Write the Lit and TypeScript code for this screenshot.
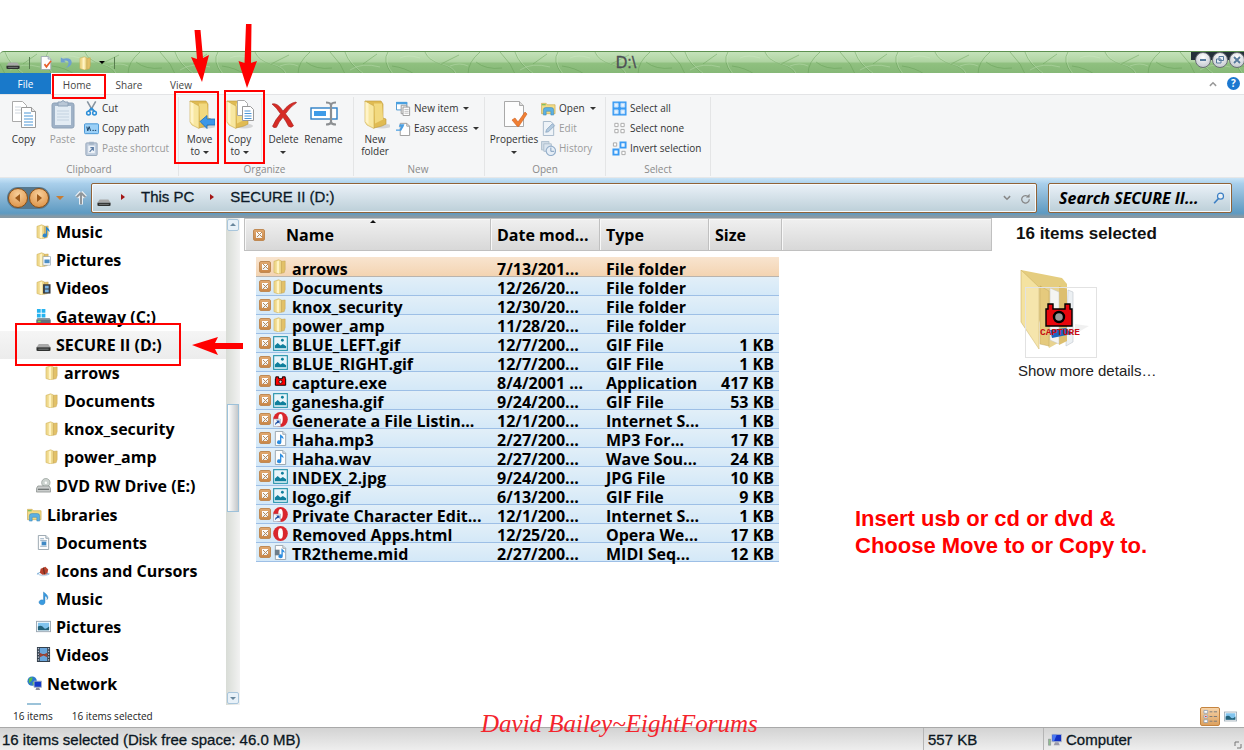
import { LitElement, html, svg, css, TemplateResult } from "lit";
import { customElement } from "lit/decorators.js";
import { classMap } from "lit/directives/class-map.js";

const folderShape = svg`
  <path d="M1 2.5 6 .8 9 2v13l-3 1-5-1.6z" fill="#efd98c" stroke="#c9a94e" stroke-width=".5"/>
  <path d="M4 2.6 6.5 1.5v14L4 14.6z" fill="#fff4c4"/>
  <path d="M9 2.5 13 2v9l-1 3.5-3 .8z" fill="#e2c168" stroke="#b99740" stroke-width=".4"/>`;

const noteShape = svg`<path d="M8 1v8.8a3.200 2.600 0 1 0 1.600 2.200V5.200c2 .6 2.600 2 2 4 2.400-2.800.6-5-3.600-8.200z" fill="#3a9be0" stroke="#1c6fae" stroke-width=".4"/>`;

const docShape = svg`<path d="M2.500.5h8l3 3v12h-11z" fill="#fdfdfd" stroke="#98a4ae"/><path d="M10.500.5v3h3" fill="#dfe6ec" stroke="#98a4ae"/>`;

const driveShape = svg`
  <path d="M3 7.500h10l2.500 3.500h-15z" fill="#a9a9a9"/>
  <path d="M.5 11h15v3q0 .8-1.500.8h-12q-1.500 0-1.500-.8z" fill="#2f3130"/>
  <path d="M2.500 13h11" stroke="#7c8080"/>`;

const bigFolder = svg`
  <ellipse cx="22" cy="27" rx="9" ry="2.500" fill="#0002"/>
  <path d="M5 2h16l2 3v14l3 1v5l-4 2-8 2z" fill="#e0bb53" stroke="#bd983a" stroke-width=".6"/>
  <path d="M14 4.500h8l1 16-8 4z" fill="#f2d97f"/>
  <path d="M5 2l9 5v22.500L7 26 5 23z" fill="#f8e7a0" stroke="#caa748" stroke-width=".6"/>
  <path d="M5.500 3l3 1.500v21l-3-3z" fill="#fff4c8"/>`;

const icons: Record<string, [number, TemplateResult]> = {
  folder: [16, folderShape],
  folderMusic: [16, svg`${folderShape}<path d="M10.500 2.500v8a2.400 2 0 1 0 1.400 1.800V6.500l2.600 2q.4-3-4-6z" fill="#2d86cc"/>`],
  folderPictures: [16, svg`${folderShape}<rect x="7.500" y="5" width="8" height="9" fill="#fff" stroke="#8fa2b2" stroke-width=".7"/><path d="M9 8h5.500v4H9z" fill="#4d8fc4"/>`],
  folderVideos: [16, svg`${folderShape}<rect x="7.500" y="4.500" width="8" height="10" fill="#3b3f44"/><path d="M9.500 6h4v3h-4zM9.500 10h4v3h-4z" fill="#77b3e6"/>`],
  osDrive: [16, svg`<path d="M1 0h4v4H1zM6 0h4v4H6zM1 5h4v4H1zM6 5h4v4H6z" fill="#25b3f0"/><path d="M1.500 9.500h13l1 2v3.500H.5v-3.500z" fill="#8c979e"/><path d="M.5 11.500h15V15H.5z" fill="#64737c"/><rect x="2" y="12.500" width="3" height="1.500" fill="#7ed957"/>`],
  drive: [16, driveShape],
  dvd: [16, svg`<circle cx="10.500" cy="5" r="4.500" fill="#ccd3cf" stroke="#8c9691" stroke-width=".7"/><circle cx="10.500" cy="5" r="1.300" fill="#fff"/><path d="M2 8.500h12l1.500 2.500v4H.5v-4z" fill="#c9cccb" stroke="#7d8381" stroke-width=".7"/><path d="M2 12h12" stroke="#4c5150"/>`],
  library: [16, svg`<path d="M.5 2.500h5l1 1.500h8.500v9.500H.5z" fill="#f2db85" stroke="#c8a951" stroke-width=".7"/><path d="M1 4h4" stroke="#53b552"/><path d="M2.500 15V9.500q0-2.500 2.500-2.500h6q2.500 0 2.500 2.500V15h-3v-4h-5v4z" fill="#5cb0e2" stroke="#2f7fb3" stroke-width=".5"/>`],
  document: [16, svg`${docShape}<path d="M4.500 4h4M4.500 6h7M4.500 12h7" stroke="#8fa9bf"/><rect x="6" y="7" width="5" height="4" fill="#3f88c4"/>`],
  cursors: [16, svg`<path d="M1 10q7 5 14 0-1 4-7 4t-7-4z" fill="#c4d9ec"/><path d="M5 6l5-2 3 3-1 5-5 .5-3-2z" fill="#b8402c"/><path d="M8 5l1 7" stroke="#4e2b20"/><path d="M1 12l3-2M14 12l-3-1" stroke="#6ba4d2"/>`],
  note: [16, noteShape],
  picture: [16, svg`<rect x=".5" y="2.500" width="15" height="11" fill="#fff" stroke="#99a7b3"/><path d="M2 4h12v8H2z" fill="#81c4ee"/><path d="M2 8q4-2 6 1t6-1v4H2z" fill="#23627a"/>`],
  video: [16, svg`<path d="M1 0h14v16H1z" fill="#33404c"/><path d="M4 1h8v6.500H4zM4 8.500h8V15H4z" fill="#6ba6dc"/><path d="M4 6l4 2 4-2v5l-4-2-4 2z" fill="#9e4436"/><path d="M2.500 1v14M13.500 1v14" stroke="#dde" stroke-dasharray="1.500 1.500"/>`],
  network: [16, svg`<circle cx="5.500" cy="5.500" r="5" fill="#2b77d0"/><path d="M2 3q3-3 4-1l-1 3-3 3zM6 6l3 1-3 3z" fill="#55bd4c"/><path d="M7.500 5.500h8v6.500h-8z" fill="#1439c8" stroke="#aab4c4"/><path d="M10 12.500h3l1 2.500H9z" fill="#889"/>`],
  computer: [16, svg`<path d="M.5 7h2.500v7H.5z" fill="#8fbc8f" stroke="#778" stroke-width=".5"/><path d="M4.500 1.500h11v8.500h-11z" fill="#1230c4" stroke="#b9c0c8"/><path d="M5 2h5l-3 7H5z" fill="#4a78f2"/><path d="M8 10.500h4l1.500 3.500h-7z" fill="#99a"/>`],
  image: [16, svg`<rect x=".7" y=".7" width="14.600" height="14.600" fill="#e9f5fa" stroke="#2793ab" stroke-width="1.200"/><path d="M2 13v-3l3-2.500 3 2.500 2.500-1.500L14 11v2z" fill="#0f7f9c"/><circle cx="10" cy="4.500" r="1.500" fill="#0f7f9c"/>`],
  capture: [16, svg`<path d="M3 5V3h3v2h4V3h3v2h.5v7h-11V5z" fill="#f00" stroke="#000"/><circle cx="8" cy="8.300" r="1.700" fill="#ddd" stroke="#000" stroke-width=".8"/>`],
  opera: [16, svg`<ellipse cx="8" cy="8" rx="7.800" ry="8" fill="#d9262c"/><ellipse cx="8" cy="8" rx="2.600" ry="5.600" fill="#fff"/>`],
  operaLink: [16, svg`<ellipse cx="8" cy="8" rx="7.800" ry="8" fill="#d9262c"/><ellipse cx="8" cy="7.500" rx="2.400" ry="5.400" fill="#fff"/><path d="M.5 7.500h7.500v8H.5z" fill="#f4f7fb" stroke="#99a" stroke-width=".6"/><path d="M2 14q0-3 2.500-3.500l-1-1.500H7v3.500l-1.200-1Q4 12 2 14z" fill="#1d4fa5"/>`],
  audio: [16, svg`${docShape}<path d="M7.500 3.500v6.700a2.300 2 0 1 0 1.400 1.800V7l2.300 1.500Q11.500 6 7.500 3.500z" fill="#2a8ce0"/>`],
  midi: [16, svg`${docShape}<path d="M2 5h5v6H2z" fill="#6d7d8a"/><path d="M9 3.500v6.700a2.300 2 0 1 0 1.400 1.800V7l2 1.500Q12.500 6 9 3.500z" fill="#2a8ce0"/>`],
  details: [16, svg`<path d="M1 1.500h4v3H1zM1 6.500h4v3H1zM1 11.500h4v3H1z" fill="#fff" stroke="#8799b0" stroke-width=".8"/><path d="M2 8h2" stroke="#d33"/><path d="M7 3h3M11.500 3h3.500M7 8h3M11.500 8h3.500M7 13h3M11.500 13h3.500" stroke="#777"/>`],
  cut: [16, svg`<path d="M3.500.5l5.500 9.500M12.500.5L7 10" stroke="#8794a0" stroke-width="1.700"/><path d="M8 7.500L5 11M8 7.500l3 3.500" stroke="#2e8fd8" stroke-width="2"/><circle cx="4.800" cy="12.800" r="2" fill="none" stroke="#2e8fd8" stroke-width="1.600"/><circle cx="11.200" cy="12.800" r="2" fill="none" stroke="#2e8fd8" stroke-width="1.600"/>`],
  path: [16, svg`<rect x=".5" y="3" width="15" height="10.500" rx="1" fill="#9bd0f7" stroke="#4293d4"/><path d="M3 6l1 4.500L5.500 6l1.500 4.500M9 10h1.500M11.500 10H13" stroke="#143a5c" fill="none"/>`],
  shortcut: [16, svg`<rect x="2" y="2" width="12" height="13.500" rx="1" fill="#c0cddd" stroke="#93a5ba"/><path d="M5.500.8h5V4h-5z" fill="#a3b3c5"/><path d="M4.500 5h7v8h-7z" fill="#eef3f8"/><path d="M6 11.500l3.500-4M6.800 7h3.200v3.500" fill="none" stroke="#5f7ea6" stroke-width="1.200"/>`],
  newItem: [16, svg`<path d="M.5 1.500h11v8H.5z" fill="#fff" stroke="#4895d1"/><path d="M0 1h12v2.500H0z" fill="#4aa0e0"/><path d="M5.500 4.500h6v9h-6z" fill="#eee" stroke="#999"/><path d="M7.500 6.500h7v9h-7z" fill="#fff" stroke="#999"/><path d="M9 9h4.500M9 11h4.500M9 13h4.500" stroke="#bbb"/>`],
  easy: [16, svg`<path d="M4.500 2.500h7l3 3v10h-10z" fill="#fff" stroke="#999"/><path d="M11.500 2.500v3h3" fill="none" stroke="#999"/><path d="M0 9h4l1.500-3H3L4 3.500h5L8 6l-2.500 4.500H0z" fill="#4a9ee2"/>`],
  edit: [16, svg`<path d="M2.500.5h8l3 3v12h-11z" fill="#eef3f8" stroke="#a5b8c9"/><path d="M5 12l1-3 6-6 2.500 2L8 11.500z" fill="#b3cadf" stroke="#7f9cb8" stroke-width=".7"/>`],
  history: [16, svg`<path d="M.5.500h8v9h-8z" fill="#cfdae5" stroke="#aebfce"/><path d="M3 3h8v8H3z" fill="#dbe5ee" stroke="#aebfce"/><circle cx="10.500" cy="10.500" r="5" fill="#e6eef6" stroke="#94aeca" stroke-width="1.200"/><path d="M10.500 7v4H14" stroke="#7c9abb" fill="none"/>`],
  selectAll: [16, svg`<path d="M.5.500h15v15H.5z" fill="#3a9bf4"/><path d="M2.500 2.500h4v4h-4zM9.500 2.500h4v4h-4zM2.500 9.500h4v4h-4zM9.500 9.500h4v4h-4z" fill="#e6f3ff" stroke="#bcdcfa"/>`],
  selectNone: [16, svg`<path d="M3 2.500h3.500V6H3zM9.500 2.500H13V6H9.500zM3 9h3.500v3.500H3zM9.500 9H13v3.500H9.500z" fill="#fff" stroke="#a8a8a8"/>`],
  invert: [16, svg`<path d="M1.500 2h3.500v3.500H1.500zM10.500 11h3.500v3.500h-3.500z" fill="#fff" stroke="#a8a8a8"/><path d="M9 1.500h5.500V7H9zM1.500 9H7v5.500H1.500z" fill="#eef7ff" stroke="#3a9bf4" stroke-width="2"/>`],
  undo: [16, svg`<path d="M2 1.500v6h6L5.800 5.500q5-1.500 5.200 2.500 0 3-3.500 5.500 7-1.500 7-6.500-.5-6-10-4z" fill="#6f9fd0"/>`],
  check: [16, svg`${docShape}<path d="M5.500 10l3 4 6-8-1.500-1-4.500 5.500-1.500-2z" fill="#e8602c"/>`],
  magnify: [16, svg`<circle cx="10" cy="5.500" r="4" fill="#fff8" stroke="#3c7fc4" stroke-width="1.600"/><path d="M7 9l-5.500 6" stroke="#3c7fc4" stroke-width="2.200"/>`],
  refresh: [16, svg`<path d="M12.500 6A5.500 5.500 0 1 0 13.500 9" fill="none" stroke="#878787" stroke-width="1.800"/><path d="M8.500 6.500h5.500V1z" fill="#878787"/>`],
  chevDown: [16, svg`<path d="M3 5l5 5 5-5" fill="none" stroke="#888" stroke-width="2.400"/>`],
  chevUp: [16, svg`<path d="M3 11l5-5 5 5" fill="none" stroke="#999" stroke-width="2.400"/>`],
  up: [16, svg`<path d="M8 1.500L3 7M8 1.500L13 7M8 2v13.500" stroke="#eef3f7" stroke-width="4.500" fill="none"/><path d="M8 2L3 7M8 2l5 5M8 2v13" stroke="#8f959a" stroke-width="2.400" fill="none"/>`],
  bigCopy: [30, svg`<path d="M3.500 2.500h10l4 4v16h-14z" fill="#fff" stroke="#aaa"/><path d="M6 8h6M6 11h6M6 14h6" stroke="#cfd6de"/><path d="M12.500 8.500h10l4 4v16h-14z" fill="#fff" stroke="#999"/><path d="M22.500 8.500v4h4" fill="#e7e7e7" stroke="#999"/><path d="M15 14h7M15 17h9M15 20h9M15 23h9M15 26h9" stroke="#4d97d6"/>`],
  bigPaste: [30, svg`<rect x="4" y="4" width="22" height="25" rx="2" fill="#9fb2c7" stroke="#8ea2b8"/><path d="M7 7h16v19H7z" fill="#e3ecf4"/><path d="M9 12h12M9 15h12M9 18h12M9 21h12" stroke="#c3d2e0"/><path d="M10 3h3q2-3 4 0h3v4H10z" fill="#b9c7d6" stroke="#8ea2b8"/>`],
  bigMove: [30, svg`${bigFolder}<path d="M15 22.500l7-6v3.500h8v6h-8v3.500z" fill="#3c97e8" stroke="#1a6cb8" stroke-width=".8"/>`],
  bigCopyTo: [30, svg`<g transform="translate(-3 0)">${bigFolder}</g><path d="M12.500 1.500h7l3 3v12h-10z" fill="#fff" stroke="#aaa"/><path d="M17.500 7.500h8l3 3v11h-11z" fill="#fff" stroke="#999"/><path d="M19.500 12h6M19.500 14.500h7M19.500 17h7M19.500 19.500h7" stroke="#4d97d6"/>`],
  bigDelete: [30, svg`<path d="M3 5q5-2 11 7 6-8 13-9l.5.800q-6 3.500-11 11 5 6 8 12-2 2.500-5 .5-3-6-5.500-9-4 4-6.500 10-3 1-4-1 3-7 8-12.500Q8 9 3 5z" fill="#d62b25" stroke="#a51a18" stroke-width=".6"/>`],
  bigRename: [30, svg`<rect x="2" y="9" width="26" height="11" fill="#fff" stroke="#2d7fc6" stroke-width="1.400"/><rect x="5" y="12" width="12" height="5" fill="#3e9be8"/><path d="M17 3.500q4 0 5 2 1-2 5-2M22 5.500v18M17 25.500q4 0 5-2 1 2 5 2" fill="none" stroke="#8c8f92" stroke-width="2.200"/>`],
  bigFolder: [30, bigFolder],
  bigProps: [30, svg`<path d="M5.500 2.500h15l4 4v21h-19z" fill="#fdfdfd" stroke="#a9a9a9"/><path d="M20.500 2.500v4h4" fill="#ddd" stroke="#a9a9a9"/><path d="M13 21l3-2 3 4 7-10 2 2-8 12q-1 1-2 0z" fill="#f07f33" stroke="#cc5d1c" stroke-width=".6"/>`],
};

const icon = (name: string, size = 16) => html`
  <svg class="icon" width=${size} height=${size} viewBox="0 0 ${icons[name][0]} ${icons[name][0]}" aria-hidden="true">${icons[name][1]}</svg>`;

interface TreeItem { label: string; icon: string; level: number; head?: boolean; current?: boolean; }

const tree: TreeItem[] = [
  { label: "Music", icon: "folderMusic", level: 1 },
  { label: "Pictures", icon: "folderPictures", level: 1 },
  { label: "Videos", icon: "folderVideos", level: 1 },
  { label: "Gateway (C:)", icon: "osDrive", level: 1, head: true },
  { label: "SECURE II (D:)", icon: "drive", level: 1, current: true },
  { label: "arrows", icon: "folder", level: 2 },
  { label: "Documents", icon: "folder", level: 2 },
  { label: "knox_security", icon: "folder", level: 2 },
  { label: "power_amp", icon: "folder", level: 2 },
  { label: "DVD RW Drive (E:)", icon: "dvd", level: 1, head: true },
  { label: "Libraries", icon: "library", level: 0, head: true },
  { label: "Documents", icon: "document", level: 1 },
  { label: "Icons and Cursors", icon: "cursors", level: 1 },
  { label: "Music", icon: "note", level: 1 },
  { label: "Pictures", icon: "picture", level: 1 },
  { label: "Videos", icon: "video", level: 1 },
  { label: "Network", icon: "network", level: 0, head: true },
];

const files: [string, string, string, string, string][] = [
  ["folder", "arrows", "7/13/201...", "File folder", ""],
  ["folder", "Documents", "12/26/20...", "File folder", ""],
  ["folder", "knox_security", "12/30/20...", "File folder", ""],
  ["folder", "power_amp", "11/28/20...", "File folder", ""],
  ["image", "BLUE_LEFT.gif", "12/7/200...", "GIF File", "1 KB"],
  ["image", "BLUE_RIGHT.gif", "12/7/200...", "GIF File", "1 KB"],
  ["capture", "capture.exe", "8/4/2001 ...", "Application", "417 KB"],
  ["image", "ganesha.gif", "9/24/200...", "GIF File", "53 KB"],
  ["operaLink", "Generate a File Listin...", "12/1/200...", "Internet S...", "1 KB"],
  ["audio", "Haha.mp3", "2/27/200...", "MP3 For...", "17 KB"],
  ["audio", "Haha.wav", "2/27/200...", "Wave Sou...", "24 KB"],
  ["image", "INDEX_2.jpg", "9/24/200...", "JPG File", "10 KB"],
  ["image", "logo.gif", "6/13/200...", "GIF File", "9 KB"],
  ["operaLink", "Private Character Edit...", "12/1/200...", "Internet S...", "1 KB"],
  ["opera", "Removed Apps.html", "12/25/20...", "Opera We...", "17 KB"],
  ["midi", "TR2theme.mid", "2/27/200...", "MIDI Seq...", "12 KB"],
];

@customElement("app-root")
export class AppRoot extends LitElement {
  static styles = css`
    :host {
      display: flex; flex-direction: column; position: relative; box-sizing: border-box;
      min-height: 100vh; padding-top: 51px; background: #fff; color: #000; overflow: hidden;
      font: 10px/12px "Open Sans", "Noto Sans", sans-serif;
    }
    * { box-sizing: border-box; }
    button, input { font: inherit; color: inherit; margin: 0; padding: 0; border: 0; background: none; }
    .icon { display: block; flex: none; }
    .caret { display: inline-block; border: 3px solid transparent; border-top-color: currentColor; border-bottom: 0; vertical-align: middle; }

    .titlebar { position: relative; display: flex; height: 22px; border-top: 1px solid #5d9150; background: linear-gradient(#c4e2b9 0%, #b0d4a3 45%, #8fc07f 55%, #86b877 100%); border-top-left-radius: 4px; }
    .veins { position: absolute; inset: 0; width: 100%; height: 100%; }
    .quick { position: relative; display: flex; align-items: center; gap: 6px; padding-left: 6px; }
    .sep { width: 1px; height: 12px; background: #587d4f; margin: 0 3px; }
    .title { position: absolute; left: 0; right: 0; padding-left: 8px; text-align: center; margin: 0; font: 500 16px/22px "Liberation Sans", Arial, sans-serif; color: #4d4f55; -webkit-text-stroke: .3px #4d4f55; }
    .winbuttons { position: relative; display: flex; gap: 1px; margin-left: auto; align-self: start; height: 8px; background: #24303a; padding-left: 4px; }
    .round { flex: none; width: 16px; height: 16px; border-radius: 50%; border: 1px solid #6b7076; background: radial-gradient(circle at 50% 30%, #fff, #b9bfc8); display: grid; place-items: center; }
    .round:last-child { margin-right: -1px; }

    .tabs { display: flex; align-items: center; height: 21px; }
    .tab { width: 52px; height: 21px; text-align: center; color: #444; font-size: 10px; padding-top: 2px; }
    .tab.file { background: #1979ca; color: #fff; width: 51px; padding-top: 0; }
    .tabs .help { margin-left: auto; display: flex; align-items: center; gap: 9px; padding-right: 4px; }
    .q { width: 13px; height: 13px; border-radius: 50%; background: #1c78d0; color: #fff; font-weight: 700; line-height: 13px; }

    .ribbon { display: flex; height: 84px; background: #f5f6f7; border-top: 1px solid #e3e4e6; border-bottom: 1px solid #e6e7e8; color: #333; }
    .group { position: relative; display: flex; flex-direction: column; justify-content: space-between; border-right: 1px solid #e4e5e6; margin: 2px 0 1px; padding: 1px 4px 0; }
    .clipboard { width: 179px; } .organize { width: 175px; } .new { width: 131px; } .open { width: 121px; } .select { width: 105px; }
    .organize { padding-left: 1px; } .new { padding-left: 2px; }
    .tools { display: flex; align-items: flex-start; }
    .grouplabel { text-align: center; color: #8a8a8a; line-height: 14px; }
    .big { display: flex; flex-direction: column; align-items: center; width: 39px; line-height: 12px; white-space: nowrap; padding-top: 1px; }
    .big .lbl { margin-top: 4px; height: 24px; text-align: center; }
    .dim { color: #9b9b9b; }
    .col { display: flex; flex-direction: column; margin-left: 2px; }
    .small { display: flex; align-items: center; gap: 3px; height: 20px; white-space: nowrap; }
    .small .caret { margin-left: 2px; }
    .organize .tools { gap: 1px; }
    .rule { width: 1px; height: 62px; background: #e4e5e6; margin: 0 1px; }
    .new .big { width: 38px; }
    .open .big { width: 50px; }

    .nav { display: flex; align-items: center; height: 40px; padding: 0 12px 0 7px; background: linear-gradient(#c9e4f7 0, #a9cfeb 14%, #86b4d4 50%, #5d9ac2 88%, #8699a5 96%); }
    .travel { display: flex; border-radius: 12px; background: #55788f; padding: 1px; }
    .orb { width: 20px; height: 20px; border-radius: 50%; border: 1px solid #8a4f16; background: radial-gradient(circle at 50% 30%, #f8cf9a, #d98a3c); display: grid; place-items: center; }
    .orb + .orb { margin-left: 1px; }
    .recent { width: 20px; color: #c77c33; display: grid; place-items: center; margin-right: 4px; }
    .recent .caret { border-width: 4px; border-bottom: 0; }
    .field { display: flex; align-items: center; height: 30px; border: 1px solid #8f6238; box-shadow: inset 0 0 0 1px #f6fafc; border-radius: 2px; background: linear-gradient(#eaf1f8, #bccfd8); }
    .address { flex: 1; margin-left: 3px; padding: 0 5px; font: 15px/24px "Liberation Sans", Arial, sans-serif; color: #0c1a28; -webkit-text-stroke: .3px #0c1a28; }
    .address a { color: inherit; text-decoration: none; padding-bottom: 3px; }
    .address > .icon { margin-top: 4px; }
    .crumb { border: 3px solid transparent; border-left: 4px solid #a31515; border-right: 0; margin: 0 16px 3px; }
    .crumb.first { margin-left: 10px; }
    .tail { margin-left: auto; display: flex; gap: 8px; }
    .search { width: 184px; margin-left: 11px; padding: 0 6px 0 10px; }
    .search input { flex: 1; min-width: 0; outline: 0; font: italic 700 16px/22px "Open Sans", sans-serif; }
    .search input::placeholder { color: #000; opacity: 1; }

    .body { flex: 1; display: flex; }
    .side { display: flex; width: 244px; flex: none; }
    .tree { flex: 1; margin: 0; padding: 0; list-style: none; font-weight: 700; font-size: 16px; }
    .node a { display: flex; align-items: center; gap: 5px; height: 28px; padding-left: 36px; color: #000; text-decoration: none; white-space: nowrap; line-height: 28px; }
    .node.l0 a { padding-left: 27px; }
    .node.l2 a { padding-left: 45px; gap: 4px; }
    .node .icon { margin-bottom: 2px; }
    .node.head { margin-top: 1px; }
    .node.current { background: linear-gradient(#f5f5f5, #ececec); }
    .more { width: 14px; height: 2px; margin: 5px 0 0 27px; background: #9cc3d9; }
    .scroll { width: 14px; margin-right: 4px; display: flex; flex-direction: column; background: linear-gradient(90deg, #d8dcd6, #f2f2f2); padding: 1px; }
    .arrow { height: 12px; border: 1px solid #a9c6dc; border-radius: 2px; background: #e8f1f8; display: grid; place-items: center; color: #68869c; }
    .arrow.flip { transform: rotate(180deg); }
    .before { flex: 174; } .after { flex: 181; }
    .thumb { flex: 107; border: 1px solid #9dc1da; background: linear-gradient(90deg, #fff, #c5c8ca); }

    .list { flex: 1; min-width: 0; }
    table { width: 100%; border-collapse: separate; border-spacing: 0; table-layout: fixed; font-weight: 700; font-size: 16px; line-height: 16px; white-space: nowrap; }
    th { height: 33px; text-align: left; padding: 0 6px; background: linear-gradient(#f0f0f0, #d8d8d8); border: solid #c0c0c0; border-width: 1px 1px 1px 0; box-shadow: inset 1px 1px #f8f8f8; position: relative; }
    th:first-child { border-left-width: 1px; padding-left: 8px; }
    .cname { width: 247px; } .cdate, .ctype { width: 109px; } .csize { width: 73px; }
    .namehead { display: flex; align-items: center; gap: 21px; }
    .sorted { position: absolute; top: 1px; left: 125px; border: 3px solid transparent; border-bottom-color: #111; border-top: 0; }
    tbody::before { content: ""; display: block; height: 6px; }
    td { height: 19px; padding: 3px 7px 0 6px; background: linear-gradient(#e2eff8, #d3e8f8); box-shadow: inset 0 -1px #9dbfe6; background-clip: padding-box; }
    td.rest { background: none; box-shadow: none; }
    td.size { text-align: right; padding-right: 5px; border-right: 3px solid #fff; }
    td.name { border-left: 12px solid #fff; padding: 0 0 0 3px; }
    .hot td:not(.rest) { height: 20px; background: linear-gradient(#f8e4cf, #f3d3b0); box-shadow: inset 0 -1px #b9b4ae; }
    .cell { display: flex; align-items: center; gap: 2px; height: 19px; }
    .cell .icon, .cell .tick { margin-bottom: 1px; }
    .cell .text { margin-left: 2px; padding-top: 3px; }
    .tick { appearance: none; width: 12px; height: 12px; flex: none; border-radius: 2px; border: 1px solid #c08a54; background:
      linear-gradient(45deg, transparent 42%, #b08a60 42% 58%, transparent 58%) center / 5px 5px no-repeat,
      linear-gradient(-45deg, transparent 42%, #b08a60 42% 58%, transparent 58%) center / 5px 5px no-repeat,
      linear-gradient(#fff, #eee) center / 6px 6px no-repeat, linear-gradient(#e0a870, #c98748); }

    .pane { width: 252px; flex: none; padding: 6px 0 0 24px; font: 15px/20px "Liberation Sans", Arial, sans-serif; color: #222; }
    .pane h2 { margin: 0 0 26px; font-size: 17px; line-height: 20px; color: #111; }
    .preview { display: block; margin-left: 4px; }
    .pane p { margin: 3px 0 0 2px; }

    .counts { display: flex; align-items: center; height: 22px; padding: 0 7px 0 13px; gap: 19px; color: #222; }
    .views { margin-left: auto; display: flex; align-items: center; gap: 4px; }
    .view { display: grid; place-items: center; height: 19px; }
    .view.on { width: 20px; border: 1px solid #c5843f; border-radius: 2px; background: linear-gradient(#f6d3a8, #dda15f); }
    .status { display: flex; height: 24px; border-top: 1px solid #a9a9a9; background: linear-gradient(#d3d3d3, #efefef); font: 15px/24px "Liberation Sans", Arial, sans-serif; color: #0b1722; -webkit-text-stroke: .3px #0b1722; }
    .part { padding-left: 4px; border-left: 1px solid #b5b5b5; display: flex; align-items: center; gap: 4px; }
    .part:first-child { flex: 1; border: 0; padding-left: 2px; }
    .part.sz { width: 120px; } .part.pc { width: 201px; }
    .grip { margin: auto 2px 2px auto; }

    .marks { position: absolute; left: 0; top: 0; pointer-events: none; }
    .advice { position: absolute; left: 855px; top: 505px; margin: 0; font: 700 22px/27px "Liberation Sans", Arial, sans-serif; color: #f00; white-space: nowrap; }
    .signature { position: absolute; left: 481px; top: 708px; margin: 0; font: italic 25px/32px "Liberation Serif", serif; color: #f4242c; white-space: nowrap; }
  `;

  private big(ic: string, label: TemplateResult | string, dim = false) {
    return html`<button class=${classMap({ big: true, dim })}>${icon(ic, 30)}<span class="lbl">${label}</span></button>`;
  }

  private small(ic: string, label: string, opts: { dim?: boolean; menu?: boolean } = {}) {
    return html`<button class=${classMap({ small: true, dim: !!opts.dim })}>${icon(ic, 15)}<span>${label}</span>${opts.menu ? html`<i class="caret"></i>` : ""}</button>`;
  }

  private group(cls: string, label: string, tools: TemplateResult) {
    return html`<section class="group ${cls}" aria-label=${label}><div class="tools">${tools}</div><div class="grouplabel">${label}</div></section>`;
  }

  render() {
    const caret = html`<i class="caret"></i>`;
    return html`
      <header class="titlebar">
        <svg class="veins" aria-hidden="true">
          <defs><pattern id="leaf" width="170" height="22" patternUnits="userSpaceOnUse">
            <path d="M5 0q4 12 18 22M23 12l14-10M48 0q-6 9 4 22M52 14q14 2 22 8M85 0q3 8 16 12t14 10M101 12l18-9M128 22q0-12 12-22M136 10q10 8 26 6M160 0l10 12M0 12l5 10" fill="none" stroke="#5f9a50" stroke-opacity=".45"/>
            <path d="M6 0q4 12 18 22M49 0q-6 9 4 22M86 0q3 8 16 12t14 10M60 6q8-4 20 0M10 18q12-8 30-3M110 14q10-4 18 0" fill="none" stroke="#d8efcd" stroke-opacity=".3"/>
          </pattern></defs>
          <rect width="100%" height="22" fill="url(#leaf)"/>
        </svg>
        <h1 class="title">D:\\</h1>
        <div class="quick">
          ${icon("drive", 14)}<i class="sep"></i>${icon("check", 14)}${icon("undo", 14)}${icon("folder", 14)}${caret}<i class="sep"></i>
        </div>
        <div class="winbuttons">
          <button class="round" aria-label="Minimize"><svg width="8" height="8"><path d="M1 4h6" stroke="#567a9c" stroke-width="2"/></svg></button>
          <button class="round" aria-label="Restore"><svg width="8" height="8"><path d="M3 .5h4.500v4H3zM.5 3H5v4H.5z" fill="#e8eef4" stroke="#567a9c"/></svg></button>
          <button class="round" aria-label="Close"><svg width="8" height="8"><path d="M1 1l6 6M7 1L1 7" stroke="#567a9c" stroke-width="1.800"/></svg></button>
        </div>
      </header>

      <nav class="tabs">
        <button class="tab file">File</button><button class="tab">Home</button><button class="tab">Share</button><button class="tab">View</button>
        <div class="help"><button aria-label="Collapse ribbon">${icon("chevUp", 10)}</button><button class="q" aria-label="Help">?</button></div>
      </nav>

      <div class="ribbon">
        ${this.group("clipboard", "Clipboard", html`
          ${this.big("bigCopy", "Copy")}${this.big("bigPaste", "Paste", true)}
          <div class="col">${this.small("cut", "Cut")}${this.small("path", "Copy path")}${this.small("shortcut", "Paste shortcut", { dim: true })}</div>`)}
        ${this.group("organize", "Organize", html`
          ${this.big("bigMove", html`Move<br>to ${caret}`)}${this.big("bigCopyTo", html`Copy<br>to ${caret}`)}<i class="rule"></i>
          ${this.big("bigDelete", html`Delete<br>${caret}`)}${this.big("bigRename", "Rename")}`)}
        ${this.group("new", "New", html`
          ${this.big("bigFolder", html`New<br>folder`)}
          <div class="col">${this.small("newItem", "New item", { menu: true })}${this.small("easy", "Easy access", { menu: true })}</div>`)}
        ${this.group("open", "Open", html`
          ${this.big("bigProps", html`Properties<br>${caret}`)}
          <div class="col">${this.small("library", "Open", { menu: true })}${this.small("edit", "Edit", { dim: true })}${this.small("history", "History", { dim: true })}</div>`)}
        ${this.group("select", "Select", html`
          <div class="col">${this.small("selectAll", "Select all")}${this.small("selectNone", "Select none")}${this.small("invert", "Invert selection")}</div>`)}
      </div>

      <div class="nav">
        <div class="travel">
          <button class="orb" aria-label="Back"><svg width="8" height="8"><path d="M6 0v8L1 4z" fill="#9c5a1c"/></svg></button>
          <button class="orb" aria-label="Forward"><svg width="8" height="8"><path d="M2 0v8l5-4z" fill="#9c5a1c"/></svg></button>
        </div>
        <button class="recent" aria-label="Recent locations">${caret}</button>
        <button aria-label="Up">${icon("up", 14)}</button>
        <div class="field address">
          ${icon("drive", 14)}<i class="crumb first"></i><a href="#pc">This PC</a><i class="crumb"></i><a href="#d">SECURE II (D:)</a>
          <span class="tail">${icon("chevDown", 10)}${icon("refresh", 11)}</span>
        </div>
        <div class="field search"><input type="text" aria-label="Search" placeholder="Search SECURE II...">${icon("magnify", 12)}</div>
      </div>

      <div class="body">
        <aside class="side">
          <ul class="tree">
            ${tree.map((t) => html`<li class=${classMap({ node: true, ["l" + t.level]: true, head: !!t.head, current: !!t.current })}><a href="#">${icon(t.icon, 15)}<span>${t.label}</span></a></li>`)}
            <li class="more"></li>
          </ul>
          <div class="scroll" aria-hidden="true">
            <div class="arrow flip">${caret}</div><div class="before"></div><div class="thumb"></div><div class="after"></div><div class="arrow">${caret}</div>
          </div>
        </aside>

        <main class="list">
          <table>
            <thead><tr>
              <th class="cname"><span class="namehead"><input class="tick" type="checkbox" checked aria-label="Select all items">Name</span><i class="sorted"></i></th>
              <th class="cdate">Date mod...</th><th class="ctype">Type</th><th class="csize">Size</th><th></th>
            </tr></thead>
            <tbody>
              ${files.map(([ic, name, date, type, size], i) => html`<tr class=${classMap({ hot: i === 0 })}>
                <td class="name"><label class="cell"><input class="tick" type="checkbox" checked>${icon(ic, 15)}<span class="text">${name}</span></label></td>
                <td>${date}</td><td>${type}</td><td class="size">${size}</td><td class="rest"></td></tr>`)}
            </tbody>
          </table>
        </main>

        <aside class="pane">
          <h2>16 items selected</h2>
          <svg class="preview" width="80" height="88" viewBox="0 0 80 88" role="img" aria-label="Selected items">
            <path d="M1 0 42 8 47 14v54l-18 10z" fill="#e5cd7f"/>
            <path d="M48 20l5 2v50l-7 4z" fill="#e9eef2" stroke="#b6bdc4" stroke-width=".6"/>
            <path d="M55 54l14 2-14 8z" fill="#0001"/>
            <path d="M39 16l8 3v52l-8 4z" fill="#d8b659"/><path d="M30 18l9 4v52l-9-4z" fill="#f3f3f0" stroke="#bbb" stroke-width=".5"/>
            <path d="M20 16l9 5v55l-9-2z" fill="#e2c26a" stroke="#b99c4d" stroke-width=".5"/>
            <path d="M1 0l18 17v62L1 52z" fill="#f4e2a0" stroke="#cfb366" stroke-width=".6"/>
            <rect x="5.500" y="17.500" width="71" height="70" fill="#fff2" stroke="#e2e2e2"/>
            <path d="M30 60l16-2 6 6-20 4z" fill="#1c66c0"/>
            <path d="M26 39h2v-5h5v5h12v-5h5v5h2v17H26z" fill="#e8060c" stroke="#000" stroke-width="1.400"/>
            <circle cx="39" cy="47" r="5" fill="#999" stroke="#000" stroke-width="2.400"/>
            <text x="20" y="65" font-family="Liberation Mono" font-weight="700" font-size="9.500" fill="#c80d12">CAPTURE</text>
          </svg>
          <p>Show more details…</p>
        </aside>
      </div>

      <div class="counts"><span>16 items</span><span>16 items selected</span>
        <span class="views"><button class="view on" aria-label="Details view">${icon("details", 15)}</button><button class="view" aria-label="Large icons view">${icon("picture", 13)}</button></span>
      </div>
      <footer class="status">
        <span class="part">16 items selected (Disk free space: 46.0 MB)</span>
        <span class="part sz">557 KB</span>
        <span class="part pc">${icon("computer", 14)}Computer
          <svg class="grip" width="8" height="8"><path d="M1 5V1h4M7 3v4H3" fill="none" stroke="#777"/></svg></span>
      </footer>

      <svg class="marks" width="400" height="400" aria-hidden="true">
        <g fill="none" stroke="#f00" stroke-width="2"><path d="M53 75h52v23H53zM175 92h43v71h-43zM225 91h39v72h-39zM16 324h164v41H16z"/></g>
        <path d="M194.500 30h6l2.500 28 6-3-7 27-11-25 6 2zM246 24h5.500l-.5 39 6-2-10 27-8.500-27 6 2zM192 345l26-8-3 6h28v6h-28l3 6z" fill="#f00"/>
      </svg>
      <p class="advice">Insert usb or cd or dvd &amp;<br>Choose Move to or Copy to.</p>
      <p class="signature">David Bailey~EightForums</p>
    `;
  }
}
